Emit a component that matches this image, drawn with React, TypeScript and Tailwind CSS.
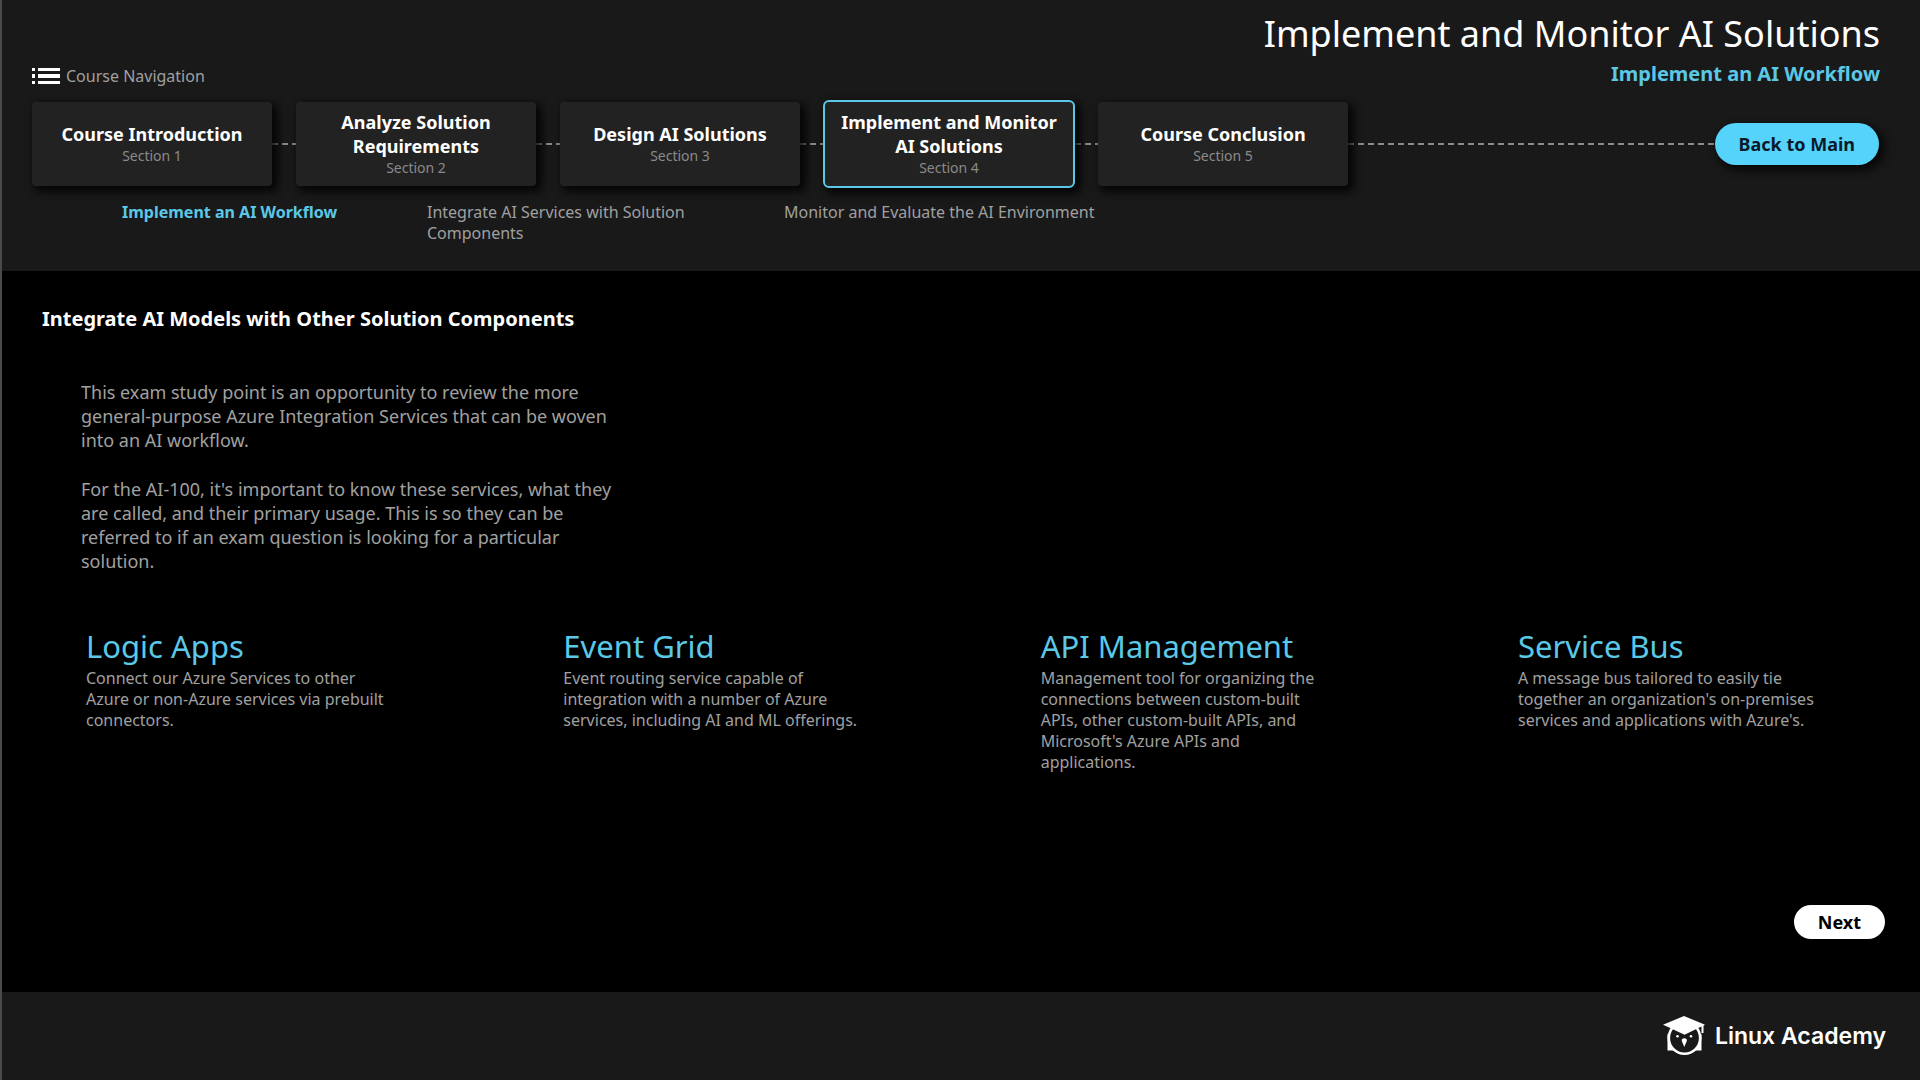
const sections = [
  { title: "Course Introduction", section: "Section 1", width: "w-60", gap: "" },
  { title: "Analyze Solution Requirements", section: "Section 2", width: "w-60", gap: "w-6" },
  { title: "Design AI Solutions", section: "Section 3", width: "w-60", gap: "w-6" },
  { title: "Implement and Monitor AI Solutions", section: "Section 4", width: "w-[252px]", gap: "w-[23px]", active: true },
  { title: "Course Conclusion", section: "Section 5", width: "w-[250px]", gap: "w-[23px]" },
];

const services = [
  {
    name: "Logic Apps",
    text: "Connect our Azure Services to other Azure or non-Azure services via prebuilt connectors.",
    inset: "",
  },
  {
    name: "Event Grid",
    text: "Event routing service capable of integration with a number of Azure services, including AI and ML offerings.",
    inset: "",
  },
  {
    name: "API Management",
    text: "Management tool for organizing the connections between custom-built APIs, other custom-built APIs, and Microsoft's Azure APIs and applications.",
    inset: "pr-4",
  },
  {
    name: "Service Bus",
    text: "A message bus tailored to easily tie together an organization's on-premises services and applications with Azure's.",
    inset: "",
  },
];

const dashes = "h-0.5 bg-[repeating-linear-gradient(90deg,#8c8c8c_0_6px,transparent_6px_10px)]";

function ListIcon() {
  return (
    <svg width="28" height="16" viewBox="0 0 28 16" fill="#fff" aria-hidden="true">
      <path d="M0 0h3v3H0zM6 0h22v3H6zM0 6h3v4H0zM6 6h22v4H6zM0 13h3v3H0zM6 13h22v3H6z" />
    </svg>
  );
}

function AcademyLogo() {
  return (
    <svg width="42" height="40" viewBox="0 0 42 40" fill="#fff" aria-hidden="true">
      <path d="M4.500 17v17.500h7L6.500 26zM38.500 17v17.500h-7l5-8.500z" />
      <circle cx="21.500" cy="22" r="15.700" fill="#191919" stroke="#fff" strokeWidth="2.600" />
      <path d="M21 0 42 8.800 40.500 9.800V17h-2v-6.400L21.500 18.800 4.500 10.800 0 8.800z" />
      <circle cx="14.500" cy="20.300" r="1.300" />
      <circle cx="28" cy="20.300" r="1.300" />
      <path d="M21.300 22.300c1.800 0 3 1.200 2.500 2.800l-2.500 5.900-2.500-5.900c-.5-1.600.7-2.800 2.500-2.800z" />
    </svg>
  );
}

export default function App() {
  return (
    <div className="flex min-h-screen flex-col border-l-2 border-[#4a4a4a] bg-black font-['Noto_Sans',sans-serif] text-[#a0a0a0]">
      <header className="bg-[#191919] pb-[27px] pl-[30px] pr-10 pt-2">
        <div className="flex items-end justify-between">
          <a href="#navigation" className="flex items-center gap-1.5 text-base leading-6">
            <ListIcon />
            Course Navigation
          </a>
          <div className="text-right">
            <h1 className="text-4xl leading-[52px] text-white">Implement and Monitor AI Solutions</h1>
            <p className="text-xl font-bold leading-7 text-[#5bc8e6]">Implement an AI Workflow</p>
          </div>
        </div>

        <nav id="navigation" aria-label="Course sections" className="mt-3 flex items-center pr-px">
          {sections.map((s, i) => (
            <div key={s.title} className="flex items-center">
              {i > 0 && <div className={`${s.gap} ${dashes}`} />}
              <button
                type="button"
                className={`z-10 flex flex-col items-center justify-center bg-[#222222] px-2 shadow-[4px_4px_8px_2px_rgba(0,0,0,0.8)] ${s.width} ${
                  s.active ? "h-[88px] rounded-md border-2 border-[#5bc8e6]" : "h-[84px] rounded"
                }`}
              >
                <span className="text-lg font-bold leading-6 text-white">{s.title}</span>
                <span className="text-sm leading-5 text-[#8a8a8a]">{s.section}</span>
              </button>
            </div>
          ))}
          <div className={`flex-1 ${dashes}`} />
          <button
            type="button"
            className="rounded-full bg-[#55d3fb] px-6 py-[9px] text-lg font-bold leading-6 text-[#0b1a2a] shadow-[4px_4px_10px_2px_rgba(0,0,0,0.7)]"
          >
            Back to Main
          </button>
        </nav>

        <nav aria-label="Lessons" className="mt-3.5 flex pl-[90px] text-base leading-[21px]">
          <a href="#workflow" className="w-[305px] font-bold text-[#5bc8e6]">
            Implement an AI Workflow
          </a>
          <a href="#integrate" className="w-[357px] pr-20">
            Integrate AI Services with Solution Components
          </a>
          <a href="#monitor">Monitor and Evaluate the AI Environment</a>
        </nav>
      </header>

      <main className="flex flex-1 flex-col px-10 pt-8">
        <h2 className="text-xl font-bold leading-8 text-white">Integrate AI Models with Other Solution Components</h2>
        <div className="mt-[45px] flex max-w-[580px] flex-col gap-[25px] pl-[39px] text-lg leading-6">
          <p>
            This exam study point is an opportunity to review the more general-purpose Azure Integration Services that
            can be woven into an AI workflow.
          </p>
          <p>
            For the AI-100, it's important to know these services, what they are called, and their primary usage. This
            is so they can be referred to if an exam question is looking for a particular solution.
          </p>
        </div>

        <div className="mt-[52px] flex justify-between pl-11 pr-[62px]">
          {services.map((s) => (
            <section key={s.name} className="w-[300px]">
              <h3 className="text-[31px] leading-[43px] text-[#5bc8e6]">{s.name}</h3>
              <p className={`text-base leading-[21px] ${s.inset}`}>{s.text}</p>
            </section>
          ))}
        </div>

        <button
          type="button"
          className="mb-[53px] -mr-[5px] mt-auto self-end rounded-full bg-white px-6 py-[5px] text-lg font-bold leading-6 text-black"
        >
          Next
        </button>
      </main>

      <footer className="flex items-center justify-end gap-2.5 bg-[#191919] pb-6 pr-[34px] pt-6">
        <AcademyLogo />
        <span className="font-['Inter',sans-serif] text-[23px] font-semibold leading-10 text-white">Linux Academy</span>
      </footer>
    </div>
  );
}
